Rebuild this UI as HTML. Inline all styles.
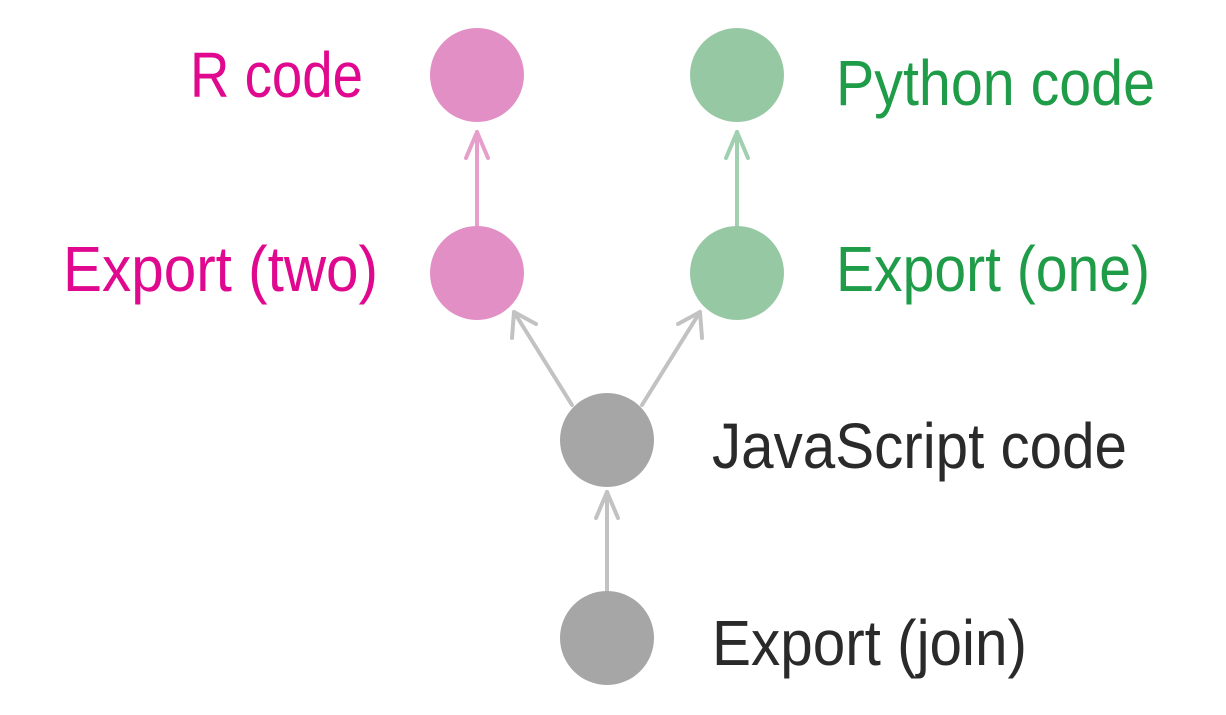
<!DOCTYPE html>
<html><head><meta charset="utf-8"><style>html,body{margin:0;padding:0;background:#fff;}svg{display:block}</style></head>
<body>
<svg width="1226" height="715" viewBox="0 0 1226 715" xmlns="http://www.w3.org/2000/svg">
<g fill="none" stroke-width="4" stroke-linecap="round" stroke-linejoin="round">
<g stroke="#e69fcb"><line x1="477" y1="228" x2="477" y2="132"/><polyline points="466,158 477,132 488,158"/></g>
<g stroke="#a0d0b0"><line x1="737" y1="228" x2="737" y2="132"/><polyline points="726,158 737,132 748,158"/></g>
<g stroke="#c2c2c2">
<line x1="572" y1="405" x2="514" y2="312"/><polyline points="512,338 514,312 536,324"/>
<line x1="642" y1="405" x2="700" y2="312"/><polyline points="678,324 700,312 702,338"/>
<line x1="607" y1="592" x2="607" y2="492"/><polyline points="596,518 607,492 618,518"/>
</g></g>
<circle cx="477" cy="75" r="47" fill="#e28fc6"/>
<circle cx="737" cy="75" r="47" fill="#97c8a4"/>
<circle cx="477" cy="273" r="47" fill="#e28fc6"/>
<circle cx="737" cy="273" r="47" fill="#97c8a4"/>
<circle cx="607" cy="440" r="47" fill="#a6a6a6"/>
<circle cx="607" cy="638" r="47" fill="#a6a6a6"/>
<g font-family="Liberation Sans, sans-serif" font-size="64">
<text x="190" y="97" fill="#e0088f" textLength="173" lengthAdjust="spacingAndGlyphs">R code</text>
<text x="836" y="105" fill="#1e9c48" textLength="319" lengthAdjust="spacingAndGlyphs">Python code</text>
<text x="63" y="291" fill="#e0088f" textLength="315" lengthAdjust="spacingAndGlyphs">Export (two)</text>
<text x="836" y="291" fill="#1e9c48" textLength="314" lengthAdjust="spacingAndGlyphs">Export (one)</text>
<text x="712" y="468" fill="#2a2a2a" textLength="415" lengthAdjust="spacingAndGlyphs">JavaScript code</text>
<text x="712" y="665" fill="#2a2a2a" textLength="315" lengthAdjust="spacingAndGlyphs">Export (join)</text>
</g>
</svg>
</body></html>
